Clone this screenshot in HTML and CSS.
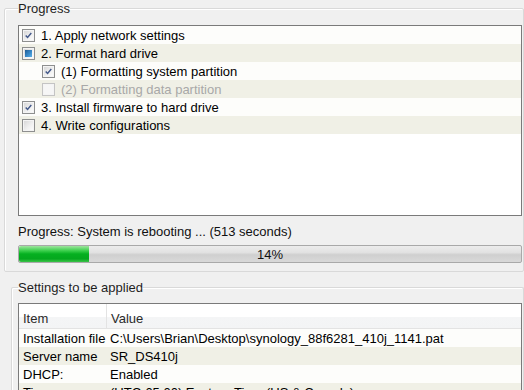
FILE: index.html
```html
<!DOCTYPE html>
<html>
<head>
<meta charset="utf-8">
<link rel="stylesheet" href="styles.css">
</head>
<body>
<fieldset class="group group-progress">
  <legend class="group-title">Progress</legend>
  <div class="listbox">
    <div class="row">
      <span class="cb checked"><svg viewBox="0 0 13 13"><path d="M3.2 6.4 L5.4 8.8 L9.8 3.6"/></svg></span>
      <span class="label">1. Apply network settings</span>
    </div>
    <div class="row alt">
      <span class="cb mixed"><span class="mix"></span></span>
      <span class="label">2. Format hard drive</span>
    </div>
    <div class="row sub">
      <span class="cb checked"><svg viewBox="0 0 13 13"><path d="M3.2 6.4 L5.4 8.8 L9.8 3.6"/></svg></span>
      <span class="label">(1) Formatting system partition</span>
    </div>
    <div class="row alt sub disabled">
      <span class="cb"></span>
      <span class="label">(2) Formatting data partition</span>
    </div>
    <div class="row">
      <span class="cb checked"><svg viewBox="0 0 13 13"><path d="M3.2 6.4 L5.4 8.8 L9.8 3.6"/></svg></span>
      <span class="label">3. Install firmware to hard drive</span>
    </div>
    <div class="row alt">
      <span class="cb"></span>
      <span class="label">4. Write configurations</span>
    </div>
  </div>
  <div class="status">Progress: System is rebooting ... (513 seconds)</div>
  <div class="pbar">
    <div class="pfill" style="width:14%"></div>
    <span class="ptext">14%</span>
  </div>
</fieldset>

<fieldset class="group group-settings">
  <legend class="group-title">Settings to be applied</legend>
  <div class="listview">
    <div class="lv-head">
      <div class="col-item">Item</div>
      <div class="col-value">Value</div>
    </div>
    <div class="lv-row">
      <div class="col-item">Installation file</div>
      <div class="col-value">C:\Users\Brian\Desktop\synology_88f6281_410j_1141.pat</div>
    </div>
    <div class="lv-row alt">
      <div class="col-item">Server name</div>
      <div class="col-value">SR_DS410j</div>
    </div>
    <div class="lv-row">
      <div class="col-item">DHCP:</div>
      <div class="col-value">Enabled</div>
    </div>
    <div class="lv-row alt">
      <div class="col-item">Time zone</div>
      <div class="col-value">(UTC-05:00) Eastern Time (US &amp; Canada)</div>
    </div>
  </div>
</fieldset>
</body>
</html>
```

FILE: styles.css
```css
html, body {
  margin: 0;
  padding: 0;
  background: #f0f0f0;
  overflow: hidden;
}
body {
  font-family: "Liberation Sans", Arial, sans-serif;
  font-size: 13px;
  line-height: 15px;
  color: #000;
  width: 524px;
  height: 390px;
}
.group {
  border: 1px solid #d9d9d9;
  box-shadow: inset 1px 1px 0 #fff;
  border-radius: 2px;
  margin: 1px 0 0 4px;
  padding: 9px 1px 8px 13px;
  min-width: 0;
}
.group-title {
  padding: 0;
  line-height: 15px;
  color: #1e1e1e;
}
.listbox {
  border: 1px solid #7a7a7a;
  background: #fff;
  height: 189px;
}
.row {
  display: flex;
  align-items: center;
  gap: 6px;
  height: 18px;
  padding-left: 3px;
  background: #fdfdfb;
}
.row.alt {
  background: #f0f0e6;
}
.row.sub {
  padding-left: 23px;
}
.row.disabled .label {
  color: #a8a8a8;
}
.cb {
  width: 11px;
  height: 11px;
  border: 1px solid #8e8f8f;
  background: linear-gradient(135deg, #d4d4d4 0%, #efefef 55%, #ffffff 100%);
  box-shadow: inset 0 0 0 1px #f4f4f4;
  display: flex;
  align-items: center;
  justify-content: center;
  flex: none;
}
.row.disabled .cb {
  border-color: #c4c4c4;
  background: #f6f6f6;
}
.cb svg {
  width: 11px;
  height: 11px;
}
.cb svg path {
  fill: none;
  stroke: #44598a;
  stroke-width: 1.7;
}
.cb .mix {
  width: 7px;
  height: 7px;
  background: linear-gradient(135deg, #1e5b94 0%, #3a8dcc 60%, #5cb0e6 100%);
}
.status {
  margin-top: 8px;
  height: 15px;
  color: #111;
}
.pbar {
  position: relative;
  margin-top: 6px;
  height: 16px;
  border: 1px solid #a9a9a9;
  border-radius: 2px;
  background: linear-gradient(#ececec 0%, #e2e2e2 40%, #cfcfcf 55%, #d9d9d9 100%);
  display: flex;
  align-items: center;
}
.pfill {
  align-self: stretch;
  border-radius: 2px 0 0 2px;
  background: linear-gradient(#9fe49f 0%, #39cf4a 30%, #05b020 50%, #05a81e 80%, #3cc44a 100%);
}
.ptext {
  position: absolute;
  left: 0;
  right: 0;
  text-align: center;
  top: 1px;
  color: #111;
}
.group-settings {
  margin-top: 8px;
  margin-left: 11px;
  padding: 8px 1px 0 6px;
  border-bottom: 0;
}
.listview {
  border: 1px solid #7a7a7a;
  border-bottom: 0;
  background: #fff;
  height: 100px;
}
.lv-head {
  display: flex;
  height: 24px;
  border-bottom: 1px solid #e3e3e3;
  background: linear-gradient(#ffffff 0%, #ffffff 55%, #f4f5f6 56%, #f3f4f5 100%);
  color: #2a2a2a;
  align-items: center;
}
.lv-head .col-item {
  border-right: 1px solid #e3e3e3;
  align-self: stretch;
  display: flex;
  align-items: center;
}
.lv-head .col-value, .lv-head .col-item {
  padding-top: 5px;
}
.col-item {
  width: 83px;
  padding-left: 4px;
  flex: none;
  white-space: nowrap;
}
.col-value {
  padding-left: 4px;
  white-space: nowrap;
}
.lv-row {
  display: flex;
  align-items: center;
  height: 18px;
  background: #fdfdfb;
}
.lv-row.alt {
  background: #f0f0e6;
}
```
